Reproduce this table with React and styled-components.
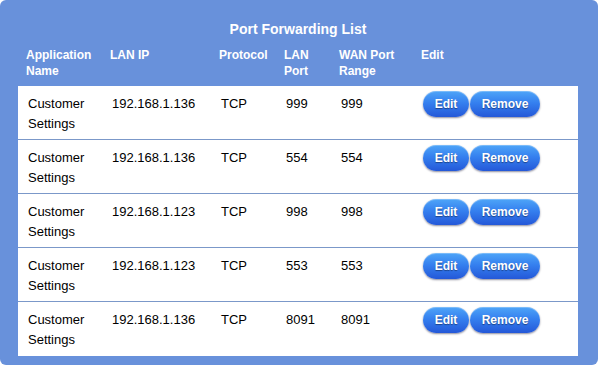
import React from 'react'
import styled, { createGlobalStyle } from 'styled-components'

const GlobalStyle = createGlobalStyle`
  html, body {
    margin: 0;
    padding: 0;
    background: #ffffff;
  }
  body {
    font-family: "Liberation Sans", Arial, sans-serif;
  }
`

const Panel = styled.div`
  box-sizing: border-box;
  width: 598px;
  height: 365px;
  background: #6891db;
  border-radius: 6px;
  padding: 21px 20px 0 18px;
  color: #fff;
`

const Title = styled.div`
  font-size: 14px;
  font-weight: bold;
  line-height: 16px;
  text-align: center;
  height: 26px;
`

const cols = '84px 109px 65px 55px 82px 1fr'

const HeadRow = styled.div`
  display: grid;
  grid-template-columns: ${cols};
  padding: 0 0 7px 8px;
  font-size: 12px;
  font-weight: bold;
  line-height: 16px;
`

const Body = styled.div`
  background: #fff;
  color: #000;
`

const Row = styled.div`
  box-sizing: border-box;
  display: grid;
  grid-template-columns: ${cols};
  height: 54px;
  padding: 8px 0 0 10px;
  font-size: 13px;
  line-height: 20px;
  border-bottom: ${p => (p.$last ? 'none' : '1px solid #7b98c9')};
`

const Cell = styled.div``

const Actions = styled.div`
  display: flex;
  align-items: flex-start;
  gap: 1px;
  margin-top: -3px;
`

const Button = styled.button`
  box-sizing: border-box;
  height: 26px;
  width: ${p => p.$w}px;
  border: none;
  border-radius: 13px;
  padding: 0;
  font-family: "Liberation Sans", Arial, sans-serif;
  font-size: 12px;
  font-weight: bold;
  color: #fff;
  text-shadow: 0 1px 1px rgba(0, 0, 0, 0.4);
  background: linear-gradient(to bottom, #4ea5f8 0%, #3580ef 45%, #2458d8 100%);
  box-shadow: 0 1px 2px rgba(0, 0, 40, 0.45), inset 0 1px 0 rgba(255, 255, 255, 0.25);
  cursor: pointer;
`

const rules = [
  { ip: '192.168.1.136', lan: '999', wan: '999' },
  { ip: '192.168.1.136', lan: '554', wan: '554' },
  { ip: '192.168.1.123', lan: '998', wan: '998' },
  { ip: '192.168.1.123', lan: '553', wan: '553' },
  { ip: '192.168.1.136', lan: '8091', wan: '8091' },
]

export default function App() {
  return (
    <>
      <GlobalStyle />
      <Panel>
        <Title>Port Forwarding List</Title>
        <HeadRow>
          <Cell>Application<br />Name</Cell>
          <Cell>LAN IP</Cell>
          <Cell>Protocol</Cell>
          <Cell>LAN<br />Port</Cell>
          <Cell>WAN Port<br />Range</Cell>
          <Cell>Edit</Cell>
        </HeadRow>
        <Body>
          {rules.map((r, i) => (
            <Row key={i} $last={i === rules.length - 1}>
              <Cell>Customer<br />Settings</Cell>
              <Cell>{r.ip}</Cell>
              <Cell>TCP</Cell>
              <Cell>{r.lan}</Cell>
              <Cell>{r.wan}</Cell>
              <Actions>
                <Button $w={46}>Edit</Button>
                <Button $w={70}>Remove</Button>
              </Actions>
            </Row>
          ))}
        </Body>
      </Panel>
    </>
  )
}
